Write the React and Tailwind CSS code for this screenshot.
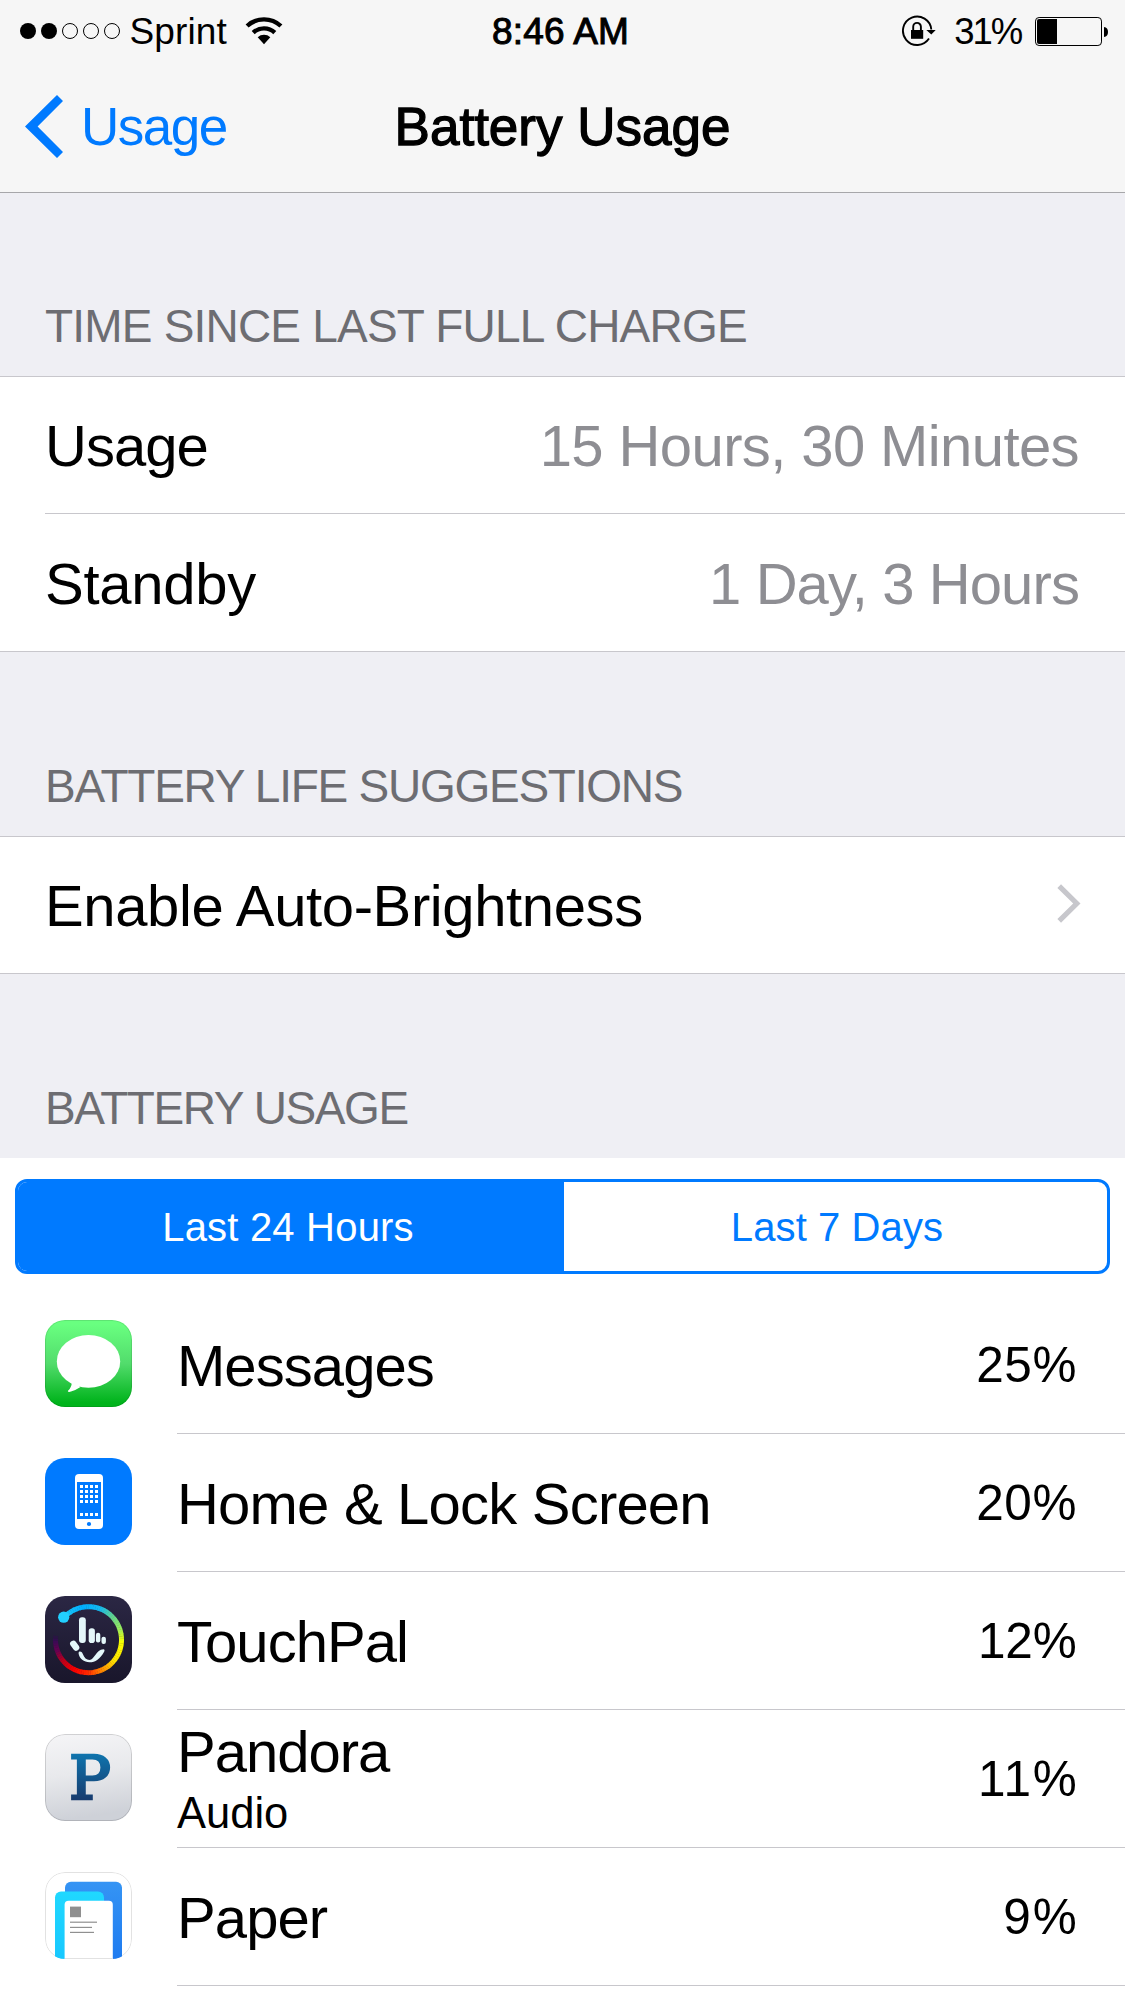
import React from "react";

function SignalDots() {
  return (
    <svg width="104" height="18" viewBox="0 0 104 18">
      {[0, 1, 2, 3, 4].map((i) => (
        <circle
          key={i}
          cx={9 + i * 21}
          cy="9"
          r={i < 2 ? 8 : 7.5}
          fill={i < 2 ? "#000" : "none"}
          stroke={i < 2 ? "none" : "#000"}
          strokeWidth="1"
        />
      ))}
    </svg>
  );
}

function Wifi() {
  return (
    <svg width="38" height="28" viewBox="0 0 38 28" fill="none" stroke="#000" strokeWidth="4.4">
      <path d="M2.1 9 A24.8 24.8 0 0 1 35.9 9" />
      <path d="M8.2 15.6 A15.8 15.8 0 0 1 29.8 15.6" />
      <path d="M19 27.2 L12.7 20.3 A9.3 9.3 0 0 1 25.3 20.3 Z" fill="#000" stroke="none" />
    </svg>
  );
}

function RotationLock() {
  return (
    <svg width="36" height="32" viewBox="0 0 36 32">
      <path d="M30.3 14.5 A14.2 14.2 0 1 0 28 23.6" fill="none" stroke="#000" strokeWidth="1.9" />
      <path d="M25.3 15 H34.7 L30.3 19.6 Z" fill="#000" />
      <rect x="10" y="15" width="12.2" height="8.8" fill="#000" />
      <path d="M12.2 15.5 V11.7 A3.8 3.8 0 0 1 19.9 11.7 V15.5" fill="none" stroke="#000" strokeWidth="1.9" />
    </svg>
  );
}

function Battery() {
  return (
    <svg width="74" height="30" viewBox="0 0 74 30">
      <rect x="0.5" y="0.5" width="66" height="28" rx="3.6" fill="none" stroke="#000" />
      <path d="M4 2 H22 V27 H4 Q2 27 2 25 V4 Q2 2 4 2 Z" fill="#000" />
      <path d="M69 10 Q73 10.5 73 15 Q73 19.5 69 20 Z" fill="#000" />
    </svg>
  );
}

function BackChevron() {
  return (
    <svg width="38" height="64" viewBox="0 0 38 64">
      <path d="M0 31.5 L32 0 L38 6 L12.6 31.5 L38 57 L32 63 Z" fill="#007aff" />
    </svg>
  );
}

function DisclosureChevron() {
  return (
    <svg width="24" height="40" viewBox="0 0 24 40">
      <path d="M2.2 2.2 L19.8 19.5 L2.2 36.9" fill="none" stroke="#c7c7cc" strokeWidth="5.2" />
    </svg>
  );
}

const iconClass = "h-[87px] w-[87px] rounded-[20px]";

function MessagesIcon() {
  return (
    <svg className={iconClass} viewBox="0 0 87 87">
      <defs>
        <linearGradient id="msg" x1="0" y1="0" x2="0" y2="1">
          <stop offset="0.05" stopColor="#69ff80" />
          <stop offset="0.5" stopColor="#52dc6c" />
          <stop offset="0.95" stopColor="#00b31b" />
        </linearGradient>
      </defs>
      <rect width="87" height="87" fill="url(#msg)" />
      <rect x="0.5" y="0.5" width="86" height="86" rx="19.5" fill="none" stroke="#000" strokeOpacity="0.1" />
      <ellipse cx="43.5" cy="41.4" rx="31.7" ry="26.4" fill="#fff" />
      <path d="M26 61 Q28 66 22.8 71 Q23 72.4 26 71.6 Q31 70 35.5 67 Z" fill="#fff" />
    </svg>
  );
}

function HomeIcon() {
  return (
    <svg className={iconClass} viewBox="0 0 87 87">
      <rect width="87" height="87" fill="#007aff" />
      <rect x="30" y="16" width="28" height="55" rx="4" fill="#fff" />
      <rect x="32" y="24" width="24" height="37" fill="#007aff" />
      {[27, 32, 37, 42, 55].map((y) =>
        [35, 40, 45, 50].map((x) => <rect key={x + "-" + y} x={x} y={y} width="3" height="3" fill="#fff" />)
      )}
      <circle cx="44" cy="66" r="2.1" fill="#007aff" />
    </svg>
  );
}

const ringStops = [
  [-138, 30, 205, 250],
  [-100, 0, 175, 255],
  [-70, 20, 185, 240],
  [-45, 95, 210, 145],
  [-20, 150, 235, 95],
  [5, 250, 255, 0],
  [40, 255, 225, 0],
  [70, 255, 125, 0],
  [92, 255, 40, 0],
  [115, 250, 0, 0],
  [140, 190, 0, 25],
  [160, 105, 0, 80],
  [178, 55, 10, 85],
  [188, 34, 28, 56],
];

function ringColor(a) {
  let i = 0;
  while (i < ringStops.length - 2 && ringStops[i + 1][0] < a) i++;
  const p = ringStops[i];
  const q = ringStops[i + 1];
  const t = Math.min(1, Math.max(0, (a - p[0]) / (q[0] - p[0])));
  const mix = [1, 2, 3].map((k) => Math.round(p[k] + (q[k] - p[k]) * t));
  return "rgb(" + mix.join(",") + ")";
}

function TouchPalIcon() {
  const pt = (a) => {
    const r = (a * Math.PI) / 180;
    return (43.5 + 33 * Math.cos(r)).toFixed(2) + " " + (43.7 + 33 * Math.sin(r)).toFixed(2);
  };
  const segs = [];
  for (let a = -138; a < 186; a += 4) segs.push(a);
  return (
    <svg className={iconClass} viewBox="0 0 87 87">
      <defs>
        <linearGradient id="tp" x1="0" y1="0" x2="0" y2="1">
          <stop offset="0" stopColor="#2b2744" />
          <stop offset="1" stopColor="#19162b" />
        </linearGradient>
      </defs>
      <rect width="87" height="87" fill="url(#tp)" />
      {segs.map((a) => (
        <path key={a} d={"M" + pt(a) + " A33 33 0 0 1 " + pt(a + 4.6)} fill="none" stroke={ringColor(a + 2)} strokeWidth="5" />
      ))}
      <circle cx="18.7" cy="21.2" r="5.6" fill="#22d0ff" />
      <g fill="#e4f7fa">
        <rect x="34" y="21.3" width="6.8" height="25.8" rx="3" />
        <rect x="43.7" y="32.3" width="6.2" height="14.7" rx="2.8" />
        <rect x="50.9" y="36.7" width="4.4" height="9.8" rx="2.1" />
        <rect x="56.5" y="40.7" width="4.4" height="7.4" rx="2.1" />
        <rect x="26.5" y="44.2" width="6.4" height="11" rx="3" transform="rotate(-36 29.7 49.7)" />
        <path d="M33.6 57.5 C33.4 55 36.5 54.8 37.8 58 C39.3 61.8 41.5 64 44.5 64 C49.5 64 51 53.5 58.4 53.3 Q60.3 53.6 59 56 C55 63 50.5 66.3 44.5 66.3 C39 66.3 34.2 62.3 33.6 57.5 Z" />
      </g>
    </svg>
  );
}

function PandoraIcon() {
  return (
    <svg className={iconClass} viewBox="0 0 87 87">
      <defs>
        <linearGradient id="pbg" x1="0" y1="0" x2="0.15" y2="1">
          <stop offset="0" stopColor="#f5f5f7" />
          <stop offset="0.5" stopColor="#e8e9ec" />
          <stop offset="1" stopColor="#ced1d8" />
        </linearGradient>
        <linearGradient id="pfg" gradientUnits="userSpaceOnUse" x1="0" y1="20" x2="0" y2="66">
          <stop offset="0" stopColor="#0f74ad" />
          <stop offset="1" stopColor="#173b6e" />
        </linearGradient>
      </defs>
      <rect width="87" height="87" fill="url(#pbg)" />
      <rect x="0.5" y="0.5" width="86" height="86" rx="19.5" fill="none" stroke="#000" strokeOpacity="0.14" />
      <text
        x="24"
        y="64.8"
        fontSize="60"
        fontFamily="'DejaVu Serif', serif"
        textLength="42"
        lengthAdjust="spacingAndGlyphs"
        fill="url(#pfg)"
        stroke="url(#pfg)"
        strokeWidth="2.6"
      >
        P
      </text>
    </svg>
  );
}

function PaperIcon() {
  return (
    <svg className={iconClass} viewBox="0 0 87 87">
      <defs>
        <linearGradient id="pb" x1="0" y1="0" x2="0" y2="1">
          <stop offset="0" stopColor="#3594f4" />
          <stop offset="1" stopColor="#1c79f0" />
        </linearGradient>
        <linearGradient id="pc" x1="0" y1="0" x2="0" y2="1">
          <stop offset="0" stopColor="#20d8ff" />
          <stop offset="1" stopColor="#15c4ff" />
        </linearGradient>
      </defs>
      <rect width="87" height="87" fill="#fff" />
      <rect x="0.5" y="0.5" width="86" height="86" rx="19.5" fill="none" stroke="#e2e2e2" />
      <rect x="20" y="9.8" width="57" height="84" rx="6" fill="url(#pb)" />
      <rect x="10" y="19.4" width="49" height="84" rx="6" fill="url(#pc)" />
      <rect x="19.6" y="28.7" width="48.2" height="64" rx="4" fill="#fff" />
      <rect x="20" y="86" width="47.5" height="1" fill="#e2e2e2" />
      <rect x="25" y="34.6" width="11" height="10.6" fill="#8f8f8f" />
      <g fill="#909090">
        <rect x="25" y="49.6" width="27" height="1.2" />
        <rect x="25" y="54.8" width="22" height="1.2" />
        <rect x="25" y="59.8" width="24" height="1.2" />
      </g>
    </svg>
  );
}

function SectionHeader({ children, className }) {
  return (
    <div className={"flex items-end pb-5 pl-[45px] text-[46px] leading-[60px] whitespace-nowrap text-[#6d6d72] " + className}>
      <h2>{children}</h2>
    </div>
  );
}

const apps = [
  { name: "Messages", ls: "tracking-[-0.94px]", pct: "25%", pls: "tracking-[0.6px] pr-12", Icon: MessagesIcon },
  { name: "Home & Lock Screen", ls: "tracking-[-0.79px]", pct: "20%", pls: "tracking-[0.6px] pr-12", Icon: HomeIcon },
  { name: "TouchPal", ls: "tracking-[-0.95px]", pct: "12%", pls: "tracking-[-0.2px] pr-[48.5px]", Icon: TouchPalIcon },
  { name: "Pandora", sub: "Audio", ls: "tracking-[-1px]", pct: "11%", pls: "tracking-[1.7px] pr-[46.5px]", Icon: PandoraIcon },
  { name: "Paper", ls: "tracking-[-0.9px]", pct: "9%", pls: "tracking-[1.8px] pr-[46.5px]", Icon: PaperIcon },
];

function AppRow({ name, sub, ls, pct, pls, Icon }) {
  return (
    <li className="flex h-[138px] pl-[45px]">
      <div className="pt-6">
        <Icon />
      </div>
      <div className="ml-[45px] flex flex-1 items-center border-b border-[#c8c7cc]">
        <div className={sub ? "flex-1 pt-2" : "flex-1 pt-0.5"}>
          <div className={"text-[58px] leading-[60px] whitespace-nowrap " + ls}>{name}</div>
          {sub && <div className="pt-px text-[43.5px] leading-[60px]">{sub}</div>}
        </div>
        <div className={"text-[49.5px] leading-[60px] " + pls}>{pct}</div>
      </div>
    </li>
  );
}

export default function App() {
  return (
    <div className="h-[2001px] w-[1125px] overflow-hidden bg-white font-['Liberation_Sans',Arial,sans-serif] text-black">
      <header className="h-[193px] border-b border-[#a7a7aa] bg-[#f6f6f6]">
        <div className="grid h-[62px] grid-cols-[1fr_auto_1fr] items-center text-[37px] leading-[64px] whitespace-nowrap">
          <div className="flex h-full items-center pl-[19px]">
            <div className="-mt-0.5 w-[110.5px]">
              <SignalDots />
            </div>
            <span className="tracking-[0.1px]">Sprint</span>
            <div className="-mt-0.5 ml-[18px]">
              <Wifi />
            </div>
          </div>
          <div className="mr-1 tracking-[0.2px] [-webkit-text-stroke:1px_black]">8:46 AM</div>
          <div className="flex h-full items-center justify-end pr-4">
            <div className="-mt-0.5">
              <RotationLock />
            </div>
            <span className="ml-[17px] text-[36.5px] tracking-[-2.1px]">31%</span>
            <div className="ml-[14px]">
              <Battery />
            </div>
          </div>
        </div>
        <div className="grid h-[130px] grid-cols-[1fr_auto_1fr] items-start text-[53px] leading-[130px]">
          <div className="flex items-center pl-[25px] text-[#007aff]">
            <BackChevron />
            <span className="ml-[18px] tracking-[-1.5px]">Usage</span>
          </div>
          <h1 className="[-webkit-text-stroke:1.3px_black]">Battery Usage</h1>
        </div>
      </header>

      <section className="bg-[#efeff4]">
        <SectionHeader className="h-[183px] tracking-[-0.8px]">TIME SINCE LAST FULL CHARGE</SectionHeader>
        <div className="border-y border-[#c8c7cc] bg-white pl-[45px] text-[58px] leading-[60px] whitespace-nowrap">
          <div className="flex h-[137px] items-center justify-between border-b border-[#c8c7cc] pt-0.5 pr-[46px]">
            <span className="tracking-[-1px]">Usage</span>
            <span className="tracking-[-0.6px] text-[#8e8e93]">15 Hours, 30 Minutes</span>
          </div>
          <div className="flex h-[137px] items-center justify-between pt-[3px] pr-[46px]">
            <span className="tracking-[-0.25px]">Standby</span>
            <span className="tracking-[-0.9px] text-[#8e8e93]">1 Day, 3 Hours</span>
          </div>
        </div>
      </section>

      <section className="bg-[#efeff4]">
        <SectionHeader className="h-[184px] tracking-[-1.25px]">BATTERY LIFE SUGGESTIONS</SectionHeader>
        <div className="flex h-[138px] items-center justify-between border-y border-[#c8c7cc] bg-white pr-[44.5px] pl-[45px]">
          <span className="pt-0.5 text-[58px] leading-[60px] tracking-[-0.38px]">Enable Auto-Brightness</span>
          <div className="-mt-0.5">
            <DisclosureChevron />
          </div>
        </div>
      </section>

      <section>
        <SectionHeader className="h-[184px] bg-[#efeff4] tracking-[-1.4px]">BATTERY USAGE</SectionHeader>
        <div className="px-[15px] pt-[21px] pb-[22px]">
          <div className="flex h-[95px] overflow-hidden rounded-[12px] border-[3px] border-[#007aff] text-center text-[40px] leading-[90px]">
            <div className="w-[546px] bg-[#007aff] pr-[6px] tracking-[0.2px] text-white">Last 24 Hours</div>
            <div className="flex-1 pl-[3px] tracking-[0.1px] text-[#007aff]">Last 7 Days</div>
          </div>
        </div>
        <ul>
          {apps.map((a) => (
            <AppRow key={a.name} {...a} />
          ))}
        </ul>
      </section>
    </div>
  );
}
